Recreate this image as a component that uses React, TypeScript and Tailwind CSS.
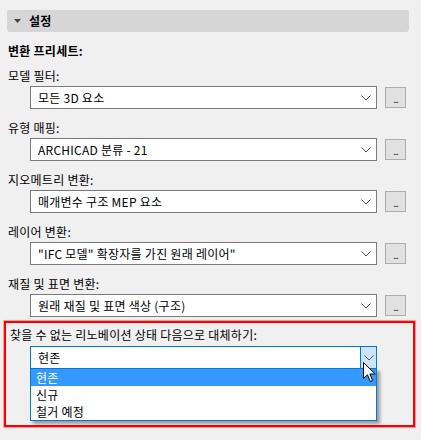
import React from "react";

const font = { fontFamily: '"Noto Sans CJK KR", "Noto Sans", sans-serif' };

function Chevron() {
  return (
    <svg width="10" height="6" viewBox="0 0 10 6" className="block">
      <path d="M0.5 0.5 L5 5 L9.5 0.5" fill="none" stroke="#555" strokeWidth="1" />
    </svg>
  );
}

function Row({ label, value }: { label: string; value: string }) {
  return (
    <div className="flex flex-col">
      <div className="h-4 leading-4 pl-2 text-[12px] tracking-[0.25px] text-black">{label}</div>
      <div className="mt-[2px] flex items-center pl-[30px]">
        <div className="flex h-[23px] w-[347px] items-center justify-between border border-[#7a7a7a] bg-white pl-[7px] pr-[5px]">
          <span className="text-[12px] leading-4 tracking-[0.25px] text-black whitespace-nowrap">{value}</span>
          <Chevron />
        </div>
        <div className="ml-[8px] flex h-[21px] w-[21px] items-end justify-center border border-[#adadad] bg-[#e1e1e1] pb-[4px]">
          <span className="text-[9px] leading-[6px] text-[#333] tracking-[-1px]">...</span>
        </div>
      </div>
    </div>
  );
}

export default function App() {
  return (
    <div className="h-[440px] w-[421px] bg-[#f0f0f0] pt-[10px]" style={font}>
      <div className="mx-[7px] flex h-[22px] w-[402px] items-center rounded-[3px] bg-[#d6d6d6] pl-[7px]">
        <svg width="7" height="4" viewBox="0 0 7 4" className="block">
          <path d="M0 0 L7 0 L3.5 4 Z" fill="#444" />
        </svg>
        <span className="ml-[8px] text-[12px] font-bold leading-4 tracking-[0.25px] text-black">설정</span>
      </div>
      <div className="mt-[11px] h-4 pl-2 text-[12px] font-bold leading-4 tracking-[0.25px] text-black">변환 프리세트:</div>
      <div className="mt-[9px] flex flex-col gap-[11px]">
        <Row label="모델 필터:" value="모든 3D 요소" />
        <Row label="유형 매핑:" value="ARCHICAD 분류 - 21" />
        <Row label="지오메트리 변환:" value="매개변수 구조 MEP 요소" />
        <Row label="레이어 변환:" value={'"IFC 모델" 확장자를 가진 원래 레이어"'} />
        <Row label="재질 및 표면 변환:" value="원래 재질 및 표면 색상 (구조)" />
      </div>
      <div className="ml-[4px] mt-[4px] h-[106px] w-[411px] border-2 border-[#ff0000] shadow-[0_0_0_1px_#ffa0a0]">
        <div className="mt-[4px] h-4 pl-[4px] text-[12px] leading-4 tracking-[0.25px] text-black">
          찾을 수 없는 리노베이션 상태 다음으로 대체하기:
        </div>
        <div className="relative mt-[3px] ml-[24px] w-[347px]">
          <div className="flex h-[23px] w-[347px] items-stretch border border-[#0078d7] bg-white">
            <div className="flex flex-1 items-center pl-[7px] text-[12px] leading-4 tracking-[0.25px] text-black">현존</div>
            <div className="flex w-[16px] items-center justify-center border-l border-[#0078d7] bg-[#cce4f7]">
              <Chevron />
            </div>
          </div>
          <div className="absolute left-0 top-[22px] w-[347px] border border-[#0078d7] bg-white shadow-[3px_3px_3px_rgba(0,0,0,0.35)]">
            <div className="h-[17px] bg-[#3399ff] pl-[5px] text-[12px] leading-[17px] tracking-[0.25px] text-white">현존</div>
            <div className="h-[17px] pl-[5px] text-[12px] leading-[17px] tracking-[0.25px] text-black">신규</div>
            <div className="h-[17px] pl-[5px] text-[12px] leading-[17px] tracking-[0.25px] text-black">철거 예정</div>
          </div>
          <svg
            className="absolute left-[333px] top-[16px]"
            width="14"
            height="21"
            viewBox="0 0 14 21"
          >
            <path
              d="M0.5 0.5 L0.5 16.5 L4.5 12.8 L7.3 19.5 L9.6 18.5 L6.9 12 L12.2 12 Z"
              fill="#fff"
              stroke="#000"
              strokeWidth="1"
              strokeLinejoin="miter"
            />
          </svg>
        </div>
      </div>
    </div>
  );
}
